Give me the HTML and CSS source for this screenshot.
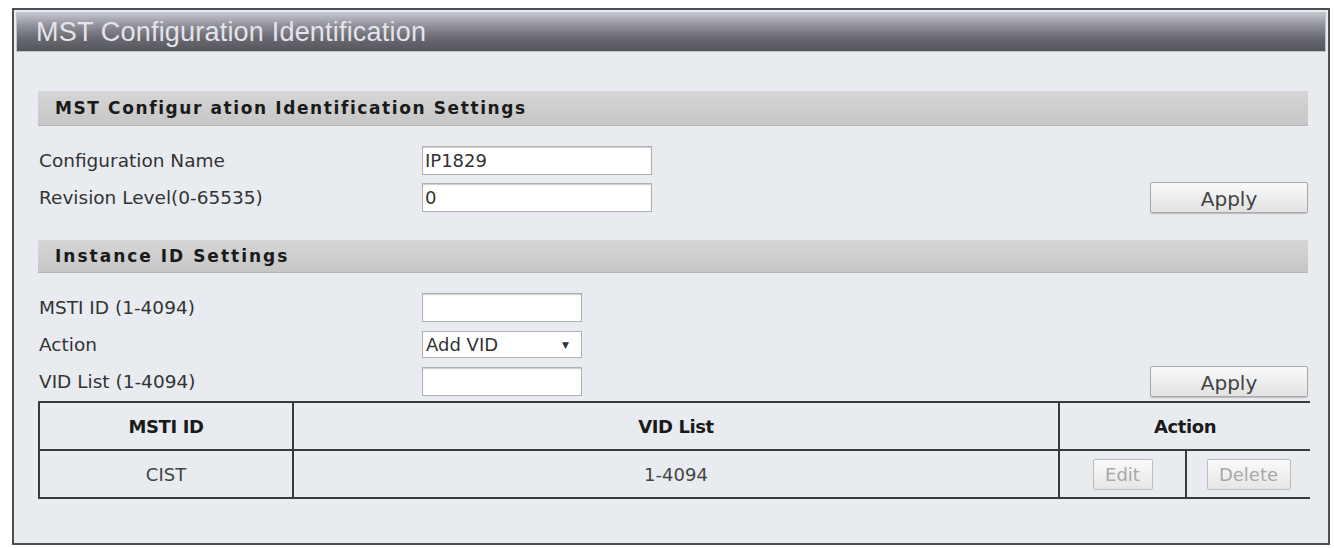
FILE: index.html
```html
<!DOCTYPE html>
<html lang="en">
<head>
  <meta charset="UTF-8">
  <title>MST Configuration Identification</title>
  <link rel="stylesheet" href="styles.css">
</head>
<body>

  <div class="panel">
    <div class="panel-title">MST Configuration Identification</div>
    <div class="panel-body">

      <div class="section-head">MST Configur ation Identification Settings</div>
      <div class="form-row">
        <label class="form-label">Configuration Name</label>
        <input class="txt txt-wide" type="text" value="IP1829">
      </div>
      <div class="form-row">
        <label class="form-label">Revision Level(0-65535)</label>
        <input class="txt txt-wide" type="text" value="0">
        <button class="btn-apply">Apply</button>
      </div>

      <div class="section-head section-two">Instance ID Settings</div>
      <div class="form-row">
        <label class="form-label">MSTI ID (1-4094)</label>
        <input class="txt txt-short" type="text" value="">
      </div>
      <div class="form-row">
        <label class="form-label">Action</label>
        <div class="select-box">
          <span>Add VID</span>
          <span class="arrow">&#9660;</span>
        </div>
      </div>
      <div class="form-row">
        <label class="form-label">VID List (1-4094)</label>
        <input class="txt txt-short" type="text" value="">
        <button class="btn-apply">Apply</button>
      </div>

      <table class="msti-table">
        <thead>
          <tr>
            <th class="col-id">MSTI ID</th>
            <th class="col-vid">VID List</th>
            <th colspan="2">Action</th>
          </tr>
        </thead>
        <tbody>
          <tr>
            <td>CIST</td>
            <td>1-4094</td>
            <td class="col-edit"><button class="btn-small">Edit</button></td>
            <td class="col-del"><button class="btn-small">Delete</button></td>
          </tr>
        </tbody>
      </table>

    </div>
  </div>

</body>
</html>
```

FILE: styles.css
```css
body {
  margin: 0;
  background: #ffffff;
  font-family: "DejaVu Sans", "Liberation Sans", sans-serif;
  color: #333;
}
.panel {
  margin: 8px 0 0 12px;
  width: 1314px;
  height: 533px;
  border: 2px solid #4a4f52;
  background: #e8ecf0;
}
.panel-title {
  height: 38px;
  margin: 2px 2px 0 2px;
  border: 1px solid #b8c6cc;
  background: linear-gradient(#c4c4cc 0%, #8e8e96 35%, #6a6a72 65%, #55555c 100%);
  color: #e4e4ea;
  font-family: "Liberation Sans", Arial, sans-serif;
  font-size: 27px;
  line-height: 38px;
  padding-left: 19px;
  letter-spacing: 0.2px;
}
.panel-body {
  padding: 39px 20px 0 24px;
}
.section-head {
  height: 34px;
  line-height: 34px;
  background: linear-gradient(#d6d6d6, #c6c6c6);
  border-bottom: 1px solid #b4b4b4;
  padding-left: 17px;
  font-weight: bold;
  font-size: 17px;
  color: #1a1a1a;
  letter-spacing: 1.6px;
  margin-bottom: 16px;
}
.section-two {
  height: 32px;
  line-height: 32px;
  margin-top: 24px;
  margin-bottom: 16px;
  letter-spacing: 2px;
}
.form-row {
  display: flex;
  align-items: center;
  height: 37px;
}
.form-label {
  width: 383px;
  font-size: 18.5px;
  padding-left: 1px;
  color: #333;
}
.txt {
  box-sizing: border-box;
  height: 29px;
  border: 1px solid #b0b0b0;
  box-shadow: inset 0 1px 1px #ccc;
  background: #fff;
  font-family: "DejaVu Sans", sans-serif;
  font-size: 18px;
  color: #333;
  padding: 2px 2px;
}
.txt-wide {
  width: 230px;
}
.txt-short {
  width: 160px;
}
.select-box {
  box-sizing: border-box;
  width: 160px;
  height: 27px;
  border: 1px solid #b0b0b0;
  background: #fff;
  display: flex;
  align-items: center;
  justify-content: space-between;
  padding: 0 12px 0 3px;
  font-size: 18px;
  color: #333;
}
.arrow {
  font-size: 9px;
}
.btn-apply {
  margin-left: auto;
  width: 158px;
  height: 31px;
  border: 1px solid #a8a8a8;
  border-radius: 2px;
  background: linear-gradient(#fafafa, #e2e2e2);
  box-shadow: 0 1px 1px #bbb;
  font-family: "DejaVu Sans", sans-serif;
  font-size: 20px;
  color: #444;
  padding: 2px 0 0 0;
}
.msti-table {
  width: 1272px;
  margin-top: 1px;
  border-collapse: collapse;
  font-size: 18px;
}
.msti-table th,
.msti-table td {
  height: 46px;
  text-align: center;
  border-top: 2px solid #3a3a3a;
  border-bottom: 2px solid #3a3a3a;
  border-left: 2px solid #3a3a3a;
  padding: 0;
}
.msti-table th {
  font-weight: bold;
  color: #1a1a1a;
  letter-spacing: -0.4px;
}
.msti-table td {
  color: #444;
}
.col-id {
  width: 252px;
}
.col-vid {
  width: 764px;
}
.col-edit {
  width: 125px;
}
.btn-small {
  height: 31px;
  border: 1px solid #bdbdbd;
  border-radius: 2px;
  background: linear-gradient(#fafafa, #e6e6e6);
  font-family: "DejaVu Sans", sans-serif;
  font-size: 18px;
  color: #a8a8a8;
  padding: 0;
}
.col-edit .btn-small {
  width: 60px;
}
.col-del .btn-small {
  width: 84px;
}
```
